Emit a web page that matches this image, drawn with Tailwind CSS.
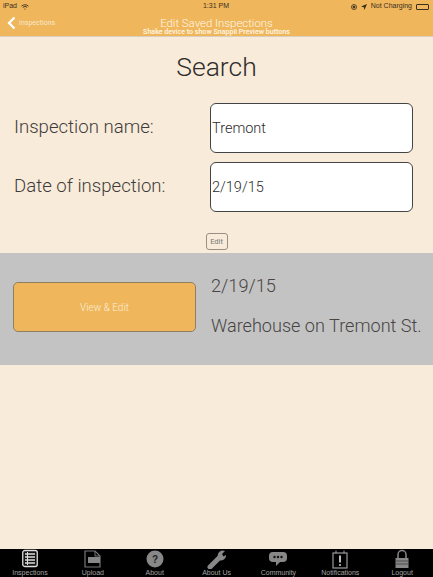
<!DOCTYPE html>
<html>
<head>
<meta charset="utf-8">
<script src="https://cdn.jsdelivr.net/npm/@tailwindcss/browser@4"></script>
</head>
<body class="m-0">
<div class="w-[433px] h-[577px] overflow-hidden flex flex-col bg-[#f8ebd9] font-['Roboto',sans-serif] font-light text-[#3f3b3b] opacity-[0.995]">
  <header class="h-[37px] shrink-0 flex flex-col bg-[#efb65c] border-b border-[#d9cfc0]">
    <div class="h-[13px] flex items-center justify-between pl-[3px] pr-[4px] font-['Liberation_Sans',sans-serif] font-normal text-[7px] text-[#3a2f1c]">
      <div class="flex items-center gap-[4px] w-[150px]"><span>iPad</span>
        <svg width="8" height="6" viewBox="0 0 8 6" fill="none" stroke="#3a2f1c" stroke-width="0.9"><path d="M.5 2.2a5 5 0 0 1 7 0M1.8 3.4a3.2 3.2 0 0 1 4.4 0"/><circle cx="4" cy="5" r=".6" fill="#3a2f1c" stroke="none"/></svg>
      </div>
      <span>1:31 PM</span>
      <div class="flex items-center justify-end gap-[4px] w-[150px]">
        <svg width="6" height="6" viewBox="0 0 6 6" fill="none" stroke="#3a2f1c" stroke-width="0.8"><circle cx="3" cy="3" r="2.5"/><circle cx="3" cy="3" r="1" fill="#3a2f1c"/></svg>
        <svg width="6" height="6" viewBox="0 0 6 6" fill="#3a2f1c"><path d="M6 0 3.4 6 2.8 3.2 0 2.6z"/></svg>
        <span>Not Charging</span>
        <span class="w-[13px] h-[6px] border border-[#3a2f1c] rounded-[1px]"></span>
      </div>
    </div>
    <div class="relative flex-1 flex flex-col items-center">
      <span class="text-[11.4px] leading-[12px] mt-[4px] text-[#fff6e6]">Edit Saved Inspections</span>
      <span class="text-[7.1px] leading-[6px] font-medium text-[#fff6e6]">Shake device to show Snappii Preview buttons</span>
      <div class="absolute left-[7px] top-[3px] flex items-center gap-[3px]">
        <svg width="9" height="14" viewBox="0 0 9 14" fill="none" stroke="#fff" stroke-width="2.3"><path d="M7.5 1.5 2 7l5.5 5.5"/></svg>
        <span class="text-[7px] text-[#f8e8cc] font-normal">Inspections</span>
      </div>
    </div>
  </header>

  <main class="flex-1 flex flex-col">
    <h1 class="text-[26.5px] leading-[32px] text-center mt-[14px] text-[#302c2c]">Search</h1>
    <div class="mt-[20px] pl-[14px] flex items-center">
      <label class="w-[196px] text-[18.6px]">Inspection name:</label>
      <div class="w-[203px] h-[50px] bg-white border border-[#444] rounded-[6px] flex items-center pl-[1px] pt-[1px] text-[14.5px] text-[#2c2a2a]">Tremont</div>
    </div>
    <div class="mt-[9px] pl-[14px] flex items-center">
      <label class="w-[196px] text-[18.6px]">Date of inspection:</label>
      <div class="w-[203px] h-[50px] bg-white border border-[#444] rounded-[6px] flex items-center pl-[1px] pt-[1px] text-[14.5px] text-[#2c2a2a]">2/19/15</div>
    </div>
    <div class="mt-[21px] flex justify-center">
      <button class="w-[22px] h-[17px] border border-[#9a8f82] rounded-[3px] text-[7.5px] font-normal text-[#777]">Edit</button>
    </div>
    <section class="mt-[3px] h-[112px] bg-[#c3c3c3] flex items-start pl-[13px] pt-[29px]">
      <button class="w-[183px] h-[50px] bg-[#efb65c] border border-[#8f7f62] rounded-[5px] text-[10px] font-light text-[#fbeed8]">View &amp; Edit</button>
      <div class="ml-[15px] flex flex-col gap-[18px] text-[#484444] -mt-[7px]">
        <span class="text-[18.2px] leading-[22px]">2/19/15</span>
        <span class="text-[18.1px] leading-[22px] whitespace-nowrap">Warehouse on Tremont St.</span>
      </div>
    </section>
  </main>

  <nav class="h-[28px] shrink-0 bg-black grid grid-cols-7 text-[#a3a3a3] text-[7px] font-normal font-['Liberation_Sans',sans-serif] leading-[8px] text-center">
    <div class="flex flex-col items-center w-[60px]">
      <svg width="16" height="20" viewBox="0 0 16 20"><rect x="0.75" y="1.5" width="14.5" height="16" rx="2" fill="#111" stroke="#ddd" stroke-width="1.3"/><path d="M3 5h10M3 8h10M3 11h10M3 14h10" stroke="#ddd" stroke-width="1.4"/><path d="M5.5 3v13" stroke="#ddd"/></svg>
      <span>Inspections</span>
    </div>
    <div class="flex flex-col items-center w-[62px]">
      <svg width="17" height="20" viewBox="0 0 17 20" fill="none"><path d="M1 18V2h10l5 5v11z" stroke="#777" stroke-width="1.2"/><path d="M11 2v5h5" stroke="#777"/><rect x="4" y="8" width="12" height="6" fill="#888"/></svg>
      <span>Upload</span>
    </div>
    <div class="flex flex-col items-center w-[62px]">
      <svg width="18" height="20" viewBox="0 0 18 20"><circle cx="9" cy="10" r="8.5" fill="#888"/><text x="9" y="13.5" text-anchor="middle" font-size="10" font-weight="700" font-family="Liberation Sans" fill="#222">?</text></svg>
      <span>About</span>
    </div>
    <div class="flex flex-col items-center w-[62px]">
      <svg width="22" height="20" viewBox="0 0 22 20" fill="none"><path d="M4 18 13 9" stroke="#888" stroke-width="5" stroke-linecap="round"/><path d="M12 8a5 5 0 0 1 7-6l-3 3 1.5 2.5L20 6a5 5 0 0 1-7 5z" fill="#888"/></svg>
      <span>About Us</span>
    </div>
    <div class="flex flex-col items-center w-[62px]">
      <svg width="18" height="20" viewBox="0 0 18 20"><path d="M4 3h10a4 4 0 0 1 4 4v2a4 4 0 0 1-4 4h-3l-4 4v-4H4a4 4 0 0 1-4-4V7a4 4 0 0 1 4-4z" fill="#888"/><circle cx="5.5" cy="8" r="1.2" fill="#111"/><circle cx="9" cy="8" r="1.2" fill="#111"/><circle cx="12.5" cy="8" r="1.2" fill="#111"/></svg>
      <span>Community</span>
    </div>
    <div class="flex flex-col items-center w-[62px]">
      <svg width="16" height="20" viewBox="0 0 16 20" fill="none"><rect x="1" y="4" width="14" height="15" stroke="#999" stroke-width="1.2"/><path d="M4 1.5v3M12 1.5v3" stroke="#999"/><path d="M8 6.5v7" stroke="#bbb" stroke-width="2"/><circle cx="8" cy="16" r="1.1" fill="#bbb"/></svg>
      <span>Notifications</span>
    </div>
    <div class="flex flex-col items-center w-[62px]">
      <svg width="16" height="20" viewBox="0 0 16 20" fill="none"><path d="M4 9V5.5a4 4 0 0 1 8 0V9" stroke="#888" stroke-width="1.5"/><rect x="1.5" y="9" width="13" height="10" fill="#888"/><path d="M1.5 12h13M1.5 15h13" stroke="#333" stroke-width=".7"/></svg>
      <span>Logout</span>
    </div>
  </nav>
</div>
</body>
</html>
